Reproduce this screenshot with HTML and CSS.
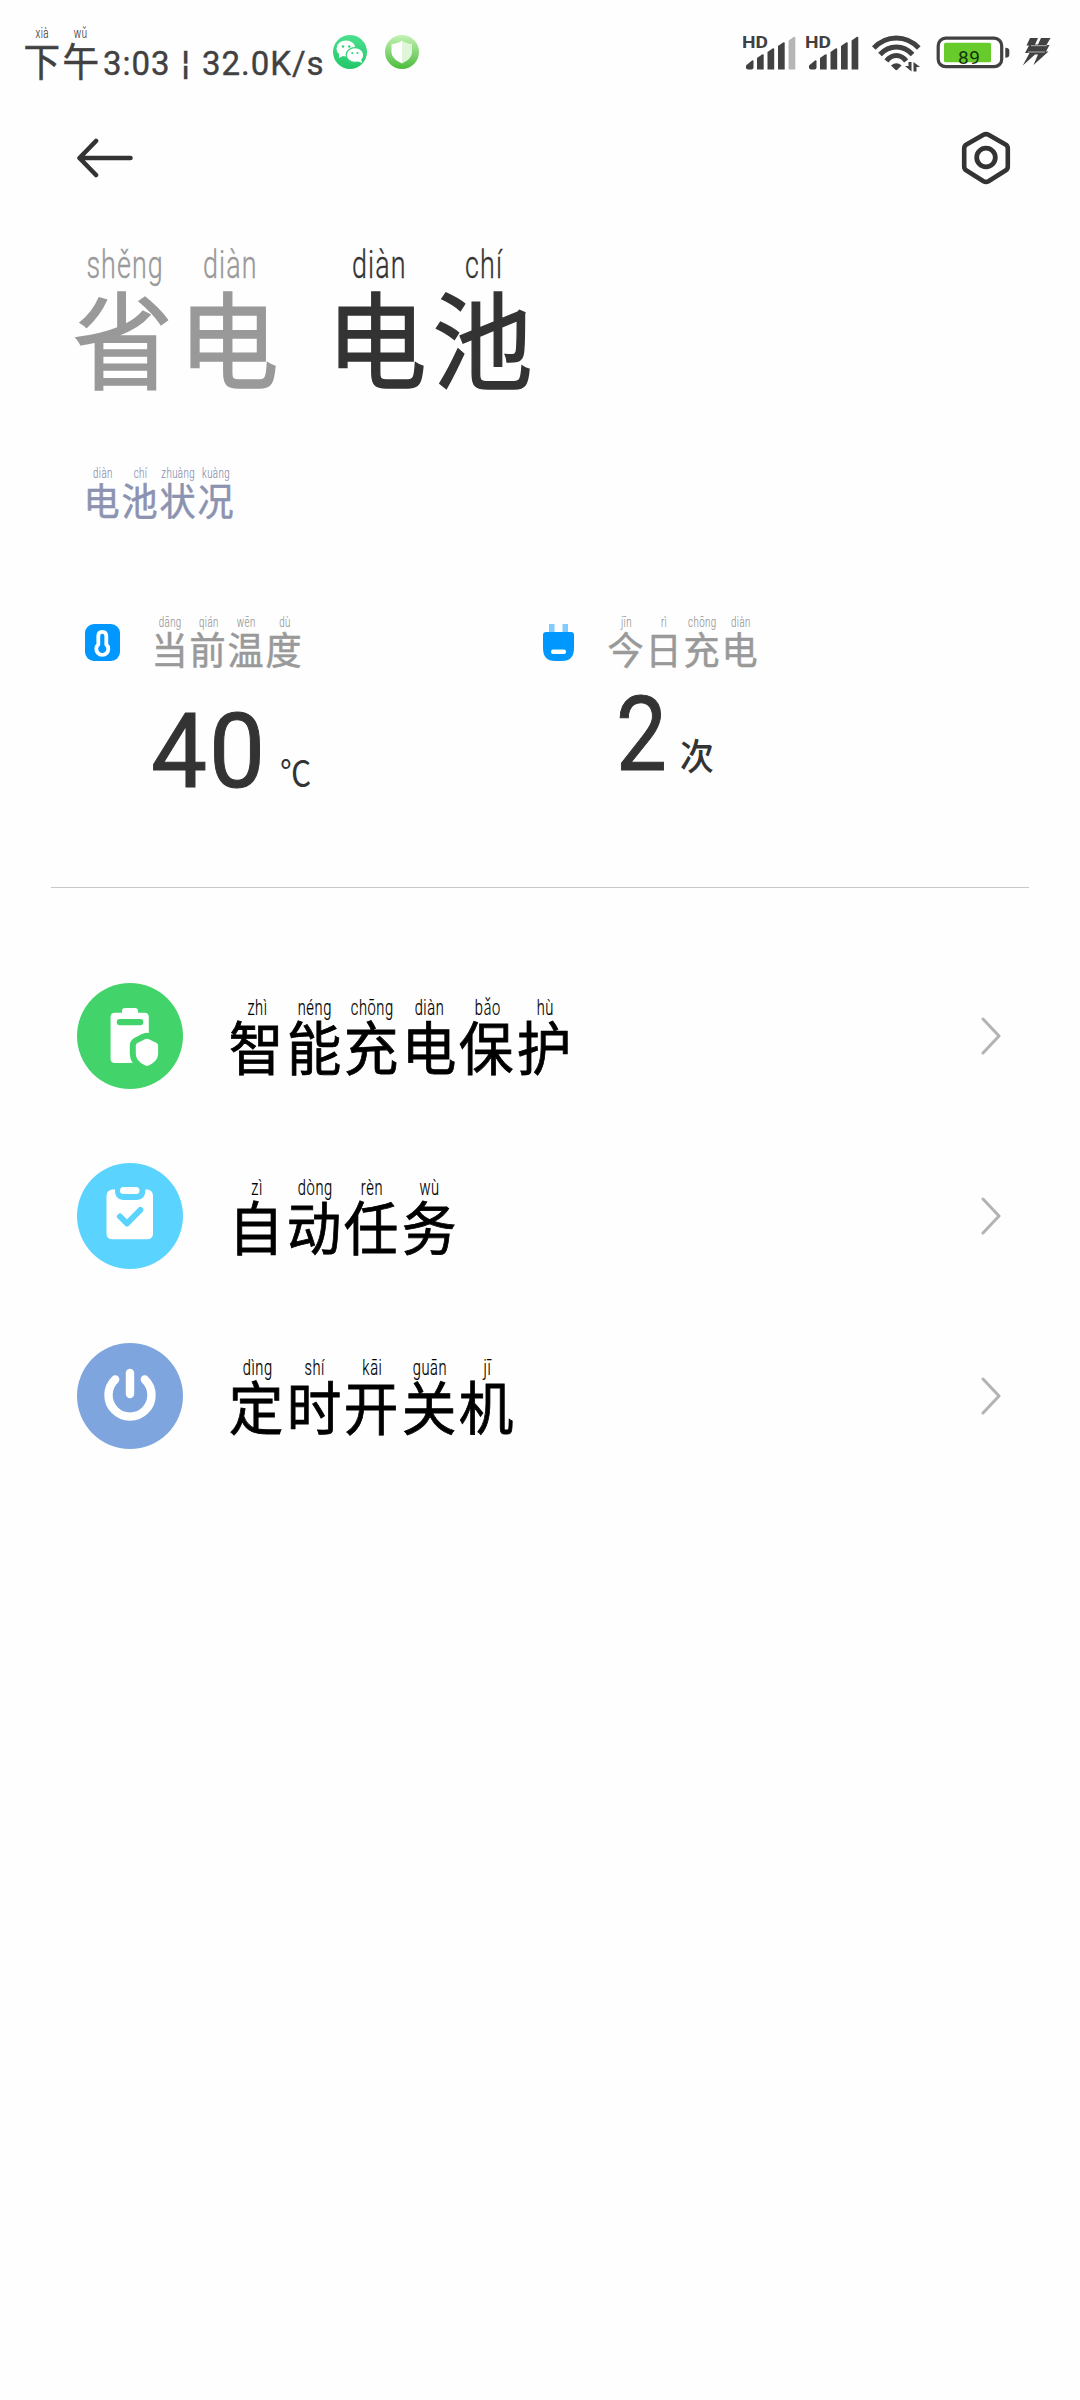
FILE: index.html
```
<!DOCTYPE html>
<html lang="zh-CN">
<head>
    <meta charset="UTF-8">
    <meta name="viewport" content="width=device-width, initial-scale=1.0">
    <title>电池</title>
    <link rel="stylesheet" href="styles.css">
</head>
<body>
    <!-- Status bar -->
    <header class="status">
        <div class="hanzi status-time">
            <span class="zi"><i>xià</i><b>下</b></span>
            <span class="zi"><i>wǔ</i><b>午</b></span>
        </div>
        <div class="status-text">3:03 ¦ 32.0K/s</div>
        <svg class="app-icon wechat" width="34" height="34" viewBox="0 0 34 34">
            <defs>
                <linearGradient id="wx" x1="0" y1="0" x2="0" y2="1">
                    <stop offset="0" stop-color="#4be08f"/>
                    <stop offset="1" stop-color="#22c768"/>
                </linearGradient>
            </defs>
            <circle cx="17" cy="17" r="17" fill="url(#wx)"/>
            <ellipse cx="13" cy="13.5" rx="9.5" ry="8" fill="#fff"/>
            <path d="M6 18l0 5 6-3z" fill="#fff"/>
            <ellipse cx="22" cy="20" rx="8.8" ry="7.4" fill="#fff" stroke="#35d47b" stroke-width="1.2"/>
            <path d="M24 26l5 2-1-5z" fill="#fff"/>
            <g fill="#35d47b">
                <circle cx="10" cy="11.5" r="1.3"/>
                <circle cx="16.3" cy="11.5" r="1.3"/>
                <circle cx="19.3" cy="18" r="1.1"/>
                <circle cx="24.5" cy="18" r="1.1"/>
            </g>
        </svg>
        <svg class="app-icon" width="34" height="34" viewBox="0 0 34 34">
            <defs>
                <linearGradient id="sh" x1="0" y1="0" x2="0" y2="1">
                    <stop offset="0" stop-color="#c3f2b4"/>
                    <stop offset="1" stop-color="#4cbb3c"/>
                </linearGradient>
            </defs>
            <circle cx="17" cy="17" r="17" fill="url(#sh)"/>
            <path d="M17 5.500c3 2.300 6.500 3.400 10 3.600v8c0 5-4 8.700-10 11.400z" fill="#dff7d8"/>
            <path d="M17 5.500c-3 2.300-6.500 3.400-10.500 3.600v8c0 5 4.500 8.700 10.500 11.400z" fill="#fff"/>
        </svg>

        <div class="status-right">
            <svg class="signal" width="54" height="36" viewBox="0 0 54 36">
                <text x="-1" y="14" textLength="26" lengthAdjust="spacingAndGlyphs">HD</text>
                <path d="M3 31.500l6-5q1.500-.8 1.500.8V33.500q0 2-2 2H5q-2 0-2-2z"/>
                <path d="M14 24l5-3.500q1.700-.6 1.700.8V35.500H14z"/>
                <path d="M24.500 18l5-3.500q1.700-.6 1.700.8V35.500h-6.700z"/>
                <path d="M35 12l5-3.500q1.700-.6 1.700.8V35.500H35z"/>
                <path class="off" d="M45.600 6.500l5-3.500q1.700-.6 1.700.8V35.500h-6.700z"/>
            </svg>
            <svg class="signal second" width="54" height="36" viewBox="0 0 54 36">
                <text x="-1" y="14" textLength="26" lengthAdjust="spacingAndGlyphs">HD</text>
                <path d="M3 31.500l6-5q1.500-.8 1.500.8V33.500q0 2-2 2H5q-2 0-2-2z"/>
                <path d="M14 24l5-3.500q1.700-.6 1.700.8V35.500H14z"/>
                <path d="M24.500 18l5-3.500q1.700-.6 1.700.8V35.500h-6.700z"/>
                <path d="M35 12l5-3.500q1.700-.6 1.700.8V35.500H35z"/>
                <path d="M45.600 6.500l5-3.500q1.700-.6 1.700.8V35.500h-6.700z"/>
            </svg>
            <svg class="wifi" width="50" height="38" viewBox="0 0 50 38">
                <g fill="none" stroke="#414141" stroke-width="5">
                    <path d="M1.800 14Q11.500 4 24.300 4T46.800 14"/>
                    <path d="M8 20.500Q15 13 24.300 13T40.600 20.500"/>
                    <path d="M14.500 27Q18.500 21.500 24.300 21.500T34.100 27"/>
                </g>
                <path d="M19 31.500q5.300-4.500 10.600 0l-4.300 4.300q-1 .8-2 0z" fill="#414141"/>
                <path d="M39.500 28v9.500L33 32h3.500v-4zM41.500 37.500V28l6.500 5h-3.500v4.500z" fill="#414141"/>
            </svg>
            <svg class="battery" width="74" height="36" viewBox="0 0 74 36">
                <rect x="2.200" y="4.200" width="63.500" height="28.500" rx="7.500" fill="none" stroke="#414141" stroke-width="3.200"/>
                <rect x="8" y="8.700" width="47" height="19.600" rx="1.500" fill="#67cb2b"/>
                <path d="M69.300 13.700q4 0 4 3v4q0 3-4 3z" fill="#414141"/>
                <text x="22" y="30.300" textLength="22">89</text>
            </svg>
            <svg class="bolt" width="30" height="36" viewBox="0 0 30 36">
                <path d="M8 4h8l-3 6.500h3L19 4h9.500l-4 7h3l-3.500 6.500h2.500L11.500 31l4.500-10.500h-3L.8 31.500 7.500 19H3l4-7.500H4.500z" fill="#414141"/>
                <path d="M9 11.700h16M6 18h17" stroke="#fff" stroke-width=".6"/>
            </svg>
        </div>
    </header>

    <!-- Navigation -->
    <nav class="nav">
        <svg width="58" height="40" viewBox="0 0 58 40">
            <path d="M20 3L3.500 20l16.500 17M4.500 20h50" fill="none" stroke="#333" stroke-width="4.600" stroke-linecap="round" stroke-linejoin="round"/>
        </svg>
        <svg width="50" height="54" viewBox="0 0 50 54">
            <path d="M22.500 3.800q2.500-1.400 5 0L44.500 13.400q2.300 1.300 2.300 4v18.200q0 2.700-2.300 4L27.500 50.200q-2.500 1.400-5 0L5.500 39.600q-2.300-1.300-2.300-4V17.400q0-2.700 2.300-4z" fill="none" stroke="#333" stroke-width="4.600"/>
            <circle cx="25" cy="26.500" r="9.300" fill="none" stroke="#333" stroke-width="4.800"/>
        </svg>
    </nav>

    <!-- Tabs -->
    <div class="tabs">
        <div class="hanzi tab">
            <span class="zi"><i>shěng</i><b>省</b></span>
            <span class="zi"><i>diàn</i><b>电</b></span>
        </div>
        <div class="hanzi tab active">
            <span class="zi"><i>diàn</i><b>电</b></span>
            <span class="zi"><i>chí</i><b>池</b></span>
        </div>
    </div>

    <!-- Battery condition -->
    <div class="hanzi section-title">
        <span class="zi"><i>diàn</i><b>电</b></span>
        <span class="zi"><i>chí</i><b>池</b></span>
        <span class="zi"><i>zhuàng</i><b>状</b></span>
        <span class="zi"><i>kuàng</i><b>况</b></span>
    </div>

    <div class="stats">
        <div class="stat">
            <svg class="stat-icon" width="35" height="37" viewBox="0 0 35 37">
                <rect width="35" height="37" rx="9" fill="#0098ff"/>
                <path d="M13.300 20.500V12q0-4.200 4-4.200t4 4.200v8.500a6 6 0 1 1-8 0z" fill="none" stroke="#fff" stroke-width="3.800"/>
            </svg>
            <div class="stat-body">
                <div class="hanzi label">
                    <span class="zi"><i>dāng</i><b>当</b></span>
                    <span class="zi"><i>qián</i><b>前</b></span>
                    <span class="zi"><i>wēn</i><b>温</b></span>
                    <span class="zi"><i>dù</i><b>度</b></span>
                </div>
                <div class="value"><span class="num">40</span><span class="unit degree">℃</span></div>
            </div>
        </div>
        <div class="stat charge">
            <svg class="stat-icon" width="31" height="37" viewBox="0 0 31 37">
                <path d="M6 0h5.500v10H6zM19.500 0H25v10h-5.500z" fill="#80cbff"/>
                <path d="M3 8h25q3 0 3 3v13q0 13-12 13h-7Q0 37 0 24V11q0-3 3-3z" fill="#0098ff"/>
                <rect x="8" y="25.500" width="15" height="4.500" rx="2" fill="#fff"/>
            </svg>
            <div class="stat-body">
                <div class="hanzi label">
                    <span class="zi"><i>jīn</i><b>今</b></span>
                    <span class="zi"><i>rì</i><b>日</b></span>
                    <span class="zi"><i>chōng</i><b>充</b></span>
                    <span class="zi"><i>diàn</i><b>电</b></span>
                </div>
                <div class="value"><span class="num">2</span><span class="unit">次</span></div>
            </div>
        </div>
    </div>

    <!-- Settings list -->
    <div class="list">
        <div class="row">
            <svg class="row-icon" width="106" height="106" viewBox="0 0 106 106">
                <circle cx="53" cy="53" r="53" fill="#42d46b"/>
                <path d="M38 29.700h7V28q0-3 3-3h10q3 0 3 3v1.700h6.500q4.300 0 4.300 4.300v42q0 4-4.300 4H38q-4.400 0-4.400-4V34q0-4.300 4.400-4.300z" fill="#fff"/>
                <rect x="39.800" y="36" width="26.500" height="6.300" rx="3" fill="#42d46b"/>
                <path d="M67.500 56.500q2.500-1.500 5 0l7 3.500q1.600.8 1.600 2.500V71q0 7-9 11.300-2.100 1-4.200 0Q58.800 78 58.800 71v-8.500q0-1.700 1.600-2.500z" fill="#42d46b" stroke="#42d46b" stroke-width="12"/>
                <path d="M67.500 56.500q2.500-1.500 5 0l7 3.500q1.600.8 1.600 2.500V71q0 7-9 11.300-2.100 1-4.200 0Q58.800 78 58.800 71v-8.500q0-1.700 1.600-2.500z" fill="#fff"/>
            </svg>
            <div class="hanzi row-text">
                <span class="zi"><i>zhì</i><b>智</b></span>
                <span class="zi"><i>néng</i><b>能</b></span>
                <span class="zi"><i>chōng</i><b>充</b></span>
                <span class="zi"><i>diàn</i><b>电</b></span>
                <span class="zi"><i>bǎo</i><b>保</b></span>
                <span class="zi"><i>hù</i><b>护</b></span>
            </div>
            <svg class="chevron" width="20" height="38" viewBox="0 0 20 38">
                <path d="M2 2l16 17L2 36"/>
            </svg>
        </div>
        <div class="row">
            <svg class="row-icon" width="106" height="106" viewBox="0 0 106 106">
                <circle cx="53" cy="53" r="53" fill="#5bd3ff"/>
                <path d="M37.800 26.300q-8.300 0-8.300 6.700v37.500q0 5.800 6 5.800h34.500q6 0 6-5.800V33q0-6.700-7.500-6.700 0 10.700-8.500 10.700H46q-8.200 0-8.200-10.700z" fill="#fff"/>
                <rect x="43" y="24" width="19.500" height="7" rx="3.500" fill="#fff"/>
                <path d="M43 53.500l7 7L63.300 47" fill="none" stroke="#5bd3ff" stroke-width="6" stroke-linecap="round" stroke-linejoin="round"/>
            </svg>
            <div class="hanzi row-text">
                <span class="zi"><i>zì</i><b>自</b></span>
                <span class="zi"><i>dòng</i><b>动</b></span>
                <span class="zi"><i>rèn</i><b>任</b></span>
                <span class="zi"><i>wù</i><b>务</b></span>
            </div>
            <svg class="chevron" width="20" height="38" viewBox="0 0 20 38">
                <path d="M2 2l16 17L2 36"/>
            </svg>
        </div>
        <div class="row">
            <svg class="row-icon" width="106" height="106" viewBox="0 0 106 106">
                <circle cx="53" cy="53" r="53" fill="#7fa5df"/>
                <path d="M38.200 36.500a21.500 21.500 0 1 0 29.600 0M53 30v21" fill="none" stroke="#fff" stroke-width="8.400" stroke-linecap="round"/>
            </svg>
            <div class="hanzi row-text">
                <span class="zi"><i>dìng</i><b>定</b></span>
                <span class="zi"><i>shí</i><b>时</b></span>
                <span class="zi"><i>kāi</i><b>开</b></span>
                <span class="zi"><i>guān</i><b>关</b></span>
                <span class="zi"><i>jī</i><b>机</b></span>
            </div>
            <svg class="chevron" width="20" height="38" viewBox="0 0 20 38">
                <path d="M2 2l16 17L2 36"/>
            </svg>
        </div>
    </div>
</body>
</html>
```
FILE: styles.css
```
* {
    box-sizing: border-box;
}
body {
    margin: 0;
    min-height: 2400px;
    background-color: #fefefe;
    font-family: Roboto, "Noto Sans CJK SC", sans-serif;
    color: #333;
}
svg {
    display: block;
    flex: none;
}

/* Character with its pinyin above, sized by the font-size of .hanzi */
.hanzi {
    display: flex;
    height: 1.4em;
}
.zi {
    display: flex;
    flex-direction: column;
    align-items: center;
    width: 1em;
    padding-top: 0.06em;
}
.zi i {
    font-style: normal;
    font-weight: 300;
    font-size: 0.375em;
    line-height: 0.91;
    white-space: nowrap;
    letter-spacing: 0.04em;
    -webkit-text-stroke: 0.01em currentColor;
    transform: translateX(0.03em) scaleX(0.68);
}
.zi b {
    font-family: "Noto Sans CJK SC", sans-serif;
    font-weight: 400;
    line-height: 1;
    -webkit-text-stroke: 0.014em currentColor;
    transform: translateX(-0.01em) scaleX(0.95);
}

/* Status bar */
.status {
    display: flex;
    align-items: flex-start;
    height: 104px;
    padding: 25px 28px 0 23px;
    color: #414141;
}
.status-time {
    font-size: 38.5px;
}
.status-text {
    font-size: 33px;
    font-weight: 400;
    line-height: 40px;
    letter-spacing: 1px;
    word-spacing: 2px;
    -webkit-text-stroke: 0.4px currentColor;
    margin: 19px 0 0 3px;
    width: 230px;
    white-space: nowrap;
}
.app-icon {
    margin-top: 10px;
}
.wechat {
    margin-right: 18px;
}
.status-right {
    display: flex;
    margin: 9px 0 0 auto;
}
.signal text {
    font: 700 16.5px Roboto, sans-serif;
}
.signal {
    fill: #414141;
}
.signal .off {
    fill: #b5b5b5;
}
.signal.second {
    margin: 0 12px 0 9px;
}
.battery {
    margin: 0 12px 0 14px;
}
.battery text {
    font: 400 19px Roboto, sans-serif;
    fill: #12350a;
}

/* Navigation */
.nav {
    display: flex;
    align-items: center;
    justify-content: space-between;
    height: 108px;
    padding: 0 69px 0 76px;
}

/* Tabs */
.tabs {
    display: flex;
    gap: 43px;
    padding: 29px 0 0 71px;
}
.tab {
    font-size: 105.5px;
    color: #999;
}
.tab.active {
    color: #333;
}

.section-title {
    font-size: 38px;
    color: #8c93b0;
    margin: 76px 0 0 83px;
}

/* Stats */
.stats {
    display: flex;
    height: 274px;
    margin: 96px 51px 0;
    padding-left: 34px;
    border-bottom: 1px solid #c8c8c8;
}
.stat {
    display: flex;
    width: 458px;
}
.stat-icon {
    margin: 10px 31px 0 0;
}
.charge .stat-icon {
    margin-right: 33px;
}
.label {
    font-size: 38px;
    color: #999;
}
.value {
    display: flex;
    align-items: baseline;
    font-size: 103px;
    line-height: 1;
    margin-top: 33px;
}
.num {
    width: 129px;
    letter-spacing: 2px;
    -webkit-text-stroke: 1px currentColor;
    transform: scaleX(0.97);
    transform-origin: left;
}
.charge .value {
    margin: 16px 0 0 9px;
}
.charge .num {
    width: 64px;
    transform: scaleX(0.88);
}
.unit {
    font-family: "Noto Sans CJK SC", sans-serif;
    font-size: 36px;
    font-weight: 500;
    line-height: 1;
    transform: scaleX(0.94);
    transform-origin: left;
}
.degree {
    font-weight: 400;
    transform: scaleX(0.87);
}

/* Settings list */
.list {
    padding-top: 58px;
}
.row {
    display: flex;
    align-items: center;
    height: 180px;
    padding: 0 79px 0 77px;
}
.row-text {
    font-size: 57.5px;
    color: #000;
    margin: -3px auto 0 45px;
}
.chevron path {
    fill: none;
    stroke: #b3b3b3;
    stroke-width: 3;
    stroke-linecap: round;
    stroke-linejoin: round;
}
```
